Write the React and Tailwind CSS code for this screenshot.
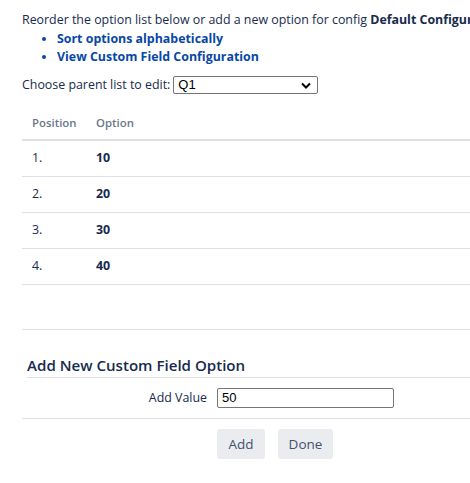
import React from 'react';

const options = ['10', '20', '30', '40'];

const App = () => {
  return (
    <div className="w-[470px] h-[483px] overflow-hidden bg-white text-[#172b4d]" style={{ fontFamily: '"Open Sans", "Noto Sans", sans-serif' }}>
      <div className="w-[600px] pl-[22px] pt-[10px] text-[12.4px] leading-[20px]">
        <p className="whitespace-nowrap">
          Reorder the option list below or add a new option for config <b className="font-bold">Default Configuration Scheme</b>
        </p>
        <ul className="list-disc pl-[35px] leading-[18px]">
          <li className="font-bold text-[#0747a6]">Sort options alphabetically</li>
          <li className="font-bold text-[#0747a6]">View Custom Field Configuration</li>
        </ul>
        <div className="mt-[9px] flex items-center">
          <span>Choose parent list to edit:</span>
          <div className="ml-[3px] flex h-[18px] w-[145px] items-center justify-between border border-[#767676] rounded-[2px] pl-[4px] pr-[6px] text-black">
            <span className="text-[13px]" style={{ fontFamily: '"Liberation Sans", Arial, sans-serif' }}>Q1</span>
            <svg width="10" height="7" viewBox="0 0 10 7"><path d="M1 1.5 L5 5.5 L9 1.5" fill="none" stroke="#000" strokeWidth="2" /></svg>
          </div>
        </div>

        <table className="mt-[9px] w-full text-left border-collapse">
          <thead>
            <tr className="border-b-2 border-[#dfe1e6]">
              <th className="w-[64px] pl-[10px] pt-[9px] pb-[6px] font-semibold text-[#6b778c] text-[11.4px]">Position</th>
              <th className="pl-[10px] pt-[9px] pb-[6px] font-semibold text-[#6b778c] text-[11.4px]">Option</th>
            </tr>
          </thead>
          <tbody>
            {options.map((o, i) => (
              <tr key={o} className="border-b border-[#dfe1e6]">
                <td className="pl-[10px] h-[36px]">{i + 1}.</td>
                <td className="pl-[10px] h-[36px] font-bold">{o}</td>
              </tr>
            ))}
          </tbody>
        </table>

        <div className="mt-[44px] border-t border-[#dfe1e6]"></div>

        <div className="mt-[24px] pl-[5px]">
          <h3 className="text-[15.1px] font-semibold leading-[22px] border-b border-[#dfe1e6] pb-[1px]">Add New Custom Field Option</h3>
          <div className="flex items-center h-[41px] -ml-[5px] border-b border-[#dfe1e6]">
            <label className="w-[185px] text-right">Add Value</label>
            <div className="ml-[10px] h-[20px] w-[177px] border border-[#767676] rounded-[2px] pl-[4px] flex items-center text-black text-[13px]" style={{ fontFamily: '"Liberation Sans", Arial, sans-serif' }}>50</div>
          </div>
        </div>

        <div className="flex gap-[13px] pl-[195px] pt-[10px]">
          <button className="h-[30px] w-[48px] rounded-[3px] bg-[#ebecf0] text-[#42526e] text-[13.5px]">Add</button>
          <button className="h-[30px] w-[55px] rounded-[3px] bg-[#ebecf0] text-[#42526e] text-[13.5px]">Done</button>
        </div>
      </div>
    </div>
  );
};

export default App;
